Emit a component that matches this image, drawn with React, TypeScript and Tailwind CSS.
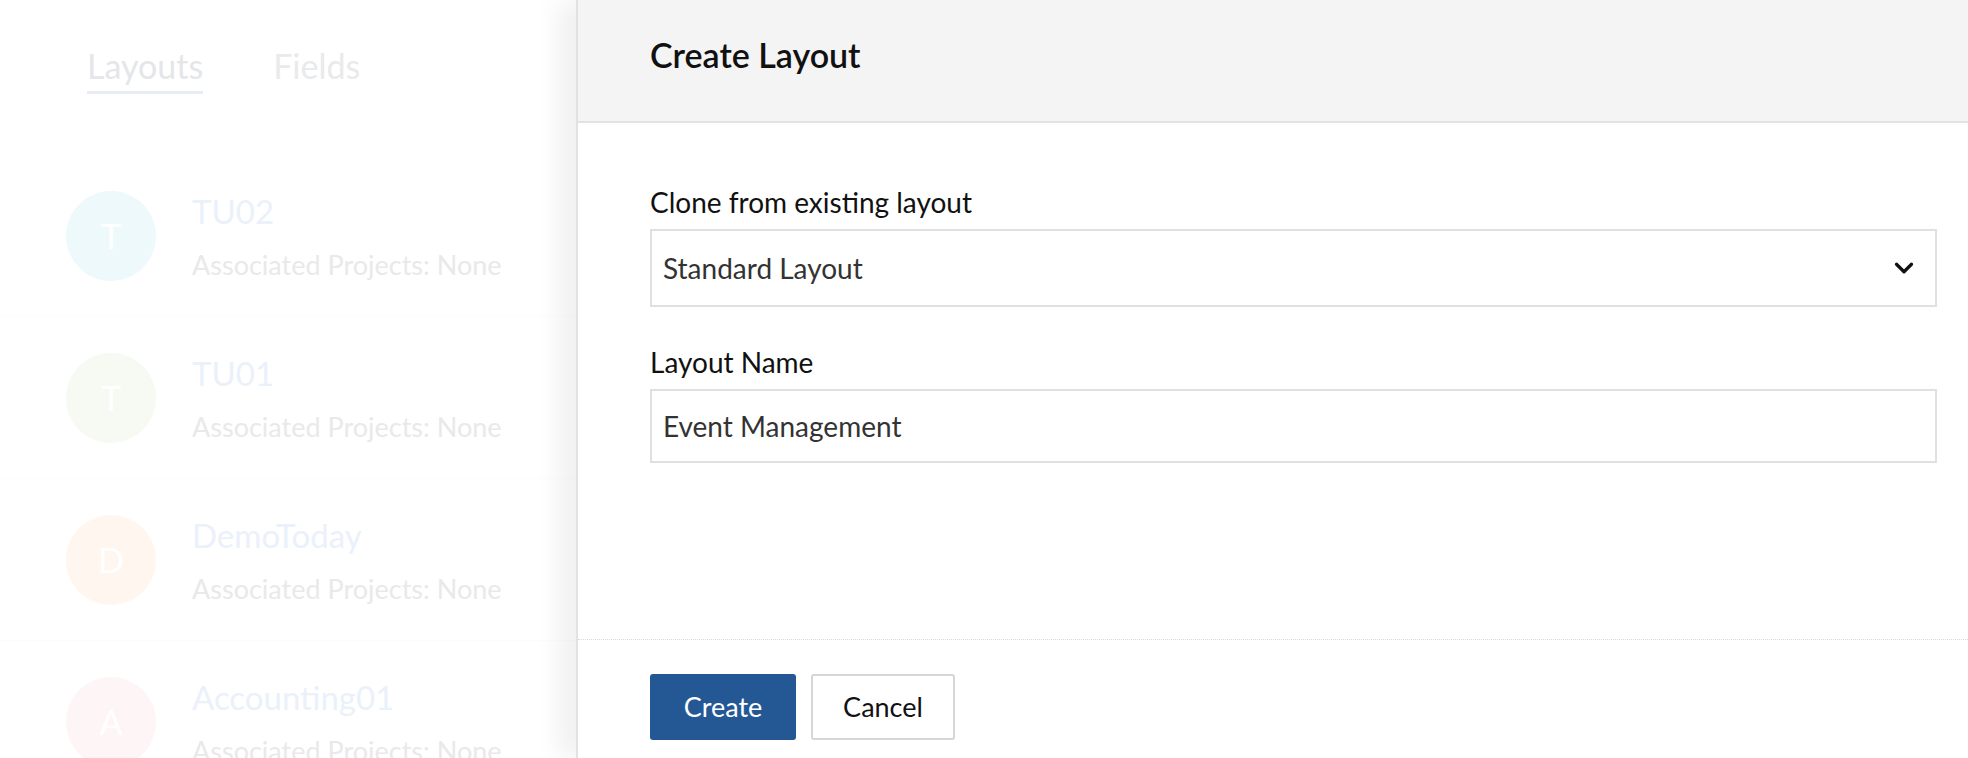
import { ChevronDown } from 'lucide-react';

const layouts = [
  { name: 'TU02', letter: 'T', color: 'bg-[#eef9fc]' },
  { name: 'TU01', letter: 'T', color: 'bg-[#f6faf2]' },
  { name: 'DemoToday', letter: 'D', color: 'bg-[#fff6f0]' },
  { name: 'Accounting01', letter: 'A', color: 'bg-[#fdf5f6]' },
];

export default function App() {
  return (
    <div className="relative w-[1968px] h-[758px] overflow-hidden bg-white font-['Lato','Noto_Sans',sans-serif]">
      {/* faded page behind the slide-in panel */}
      <div className="w-[576px]">
        <div className="flex gap-[70px] pl-[87px] pt-[46px]">
          <div className="border-b-[3px] border-[#e8edf4] pb-[5px] text-[34px] leading-[40px] text-[#e4e6e9]">Layouts</div>
          <div className="text-[34px] leading-[40px] text-[#e9eaec]">Fields</div>
        </div>
        <div className="mt-[61px]">
          {layouts.map((l) => (
            <div key={l.name} className="flex h-[162px] items-center gap-[36px] border-b border-[#fcfcfc] pl-[66px]">
              <div className={`flex h-[90px] w-[90px] items-center justify-center rounded-full text-[34px] text-white ${l.color}`}>
                {l.letter}
              </div>
              <div className="pt-[4px]">
                <div className="text-[33px] leading-[40px] text-[#eaf1fa]">{l.name}</div>
                <div className="mt-[14px] text-[27px] leading-[40px] text-[#e9e9e9]">Associated Projects: None</div>
              </div>
            </div>
          ))}
        </div>
      </div>

      {/* Create Layout panel */}
      <div className="absolute right-0 top-0 bottom-0 flex w-[1392px] flex-col border-l-2 border-[#e2e2e2] bg-white shadow-[-18px_0_24px_rgba(0,0,0,0.06)]">
        <div className="flex h-[123px] items-center border-b-2 border-[#e3e3e3] bg-[#f4f4f4] pb-[12px] pl-[72px]">
          <h1 className="text-[34px] font-semibold text-[#111]">Create Layout</h1>
        </div>

        <div className="flex-1 pl-[72px] pr-[31px] pt-[63px]">
          <label className="block text-[28px] leading-[32px] text-[#111]">Clone from existing layout</label>
          <div className="mt-[11px] flex h-[78px] items-center justify-between border-2 border-[#e0e0e0] px-[11px]">
            <span className="text-[28px] text-[#333]">Standard Layout</span>
            <ChevronDown size={30} strokeWidth={2.6} className="mr-[5px] text-[#111]" />
          </div>

          <label className="mt-[39px] block text-[28px] leading-[32px] text-[#111]">Layout Name</label>
          <div className="mt-[11px] flex h-[74px] items-center border-2 border-[#e0e0e0] px-[11px]">
            <span className="text-[28px] text-[#333]">Event Management</span>
          </div>
        </div>

        <div className="flex h-[119px] gap-[15px] border-t border-dotted border-[#dcdcdc] pl-[72px] pt-[34px]">
          <button className="h-[66px] w-[146px] rounded-[3px] bg-[#245895] text-[27px] text-white">Create</button>
          <button className="h-[66px] w-[144px] rounded-[3px] border-2 border-[#d6d6d6] bg-white text-[27px] text-[#111]">Cancel</button>
        </div>
      </div>
    </div>
  );
}
